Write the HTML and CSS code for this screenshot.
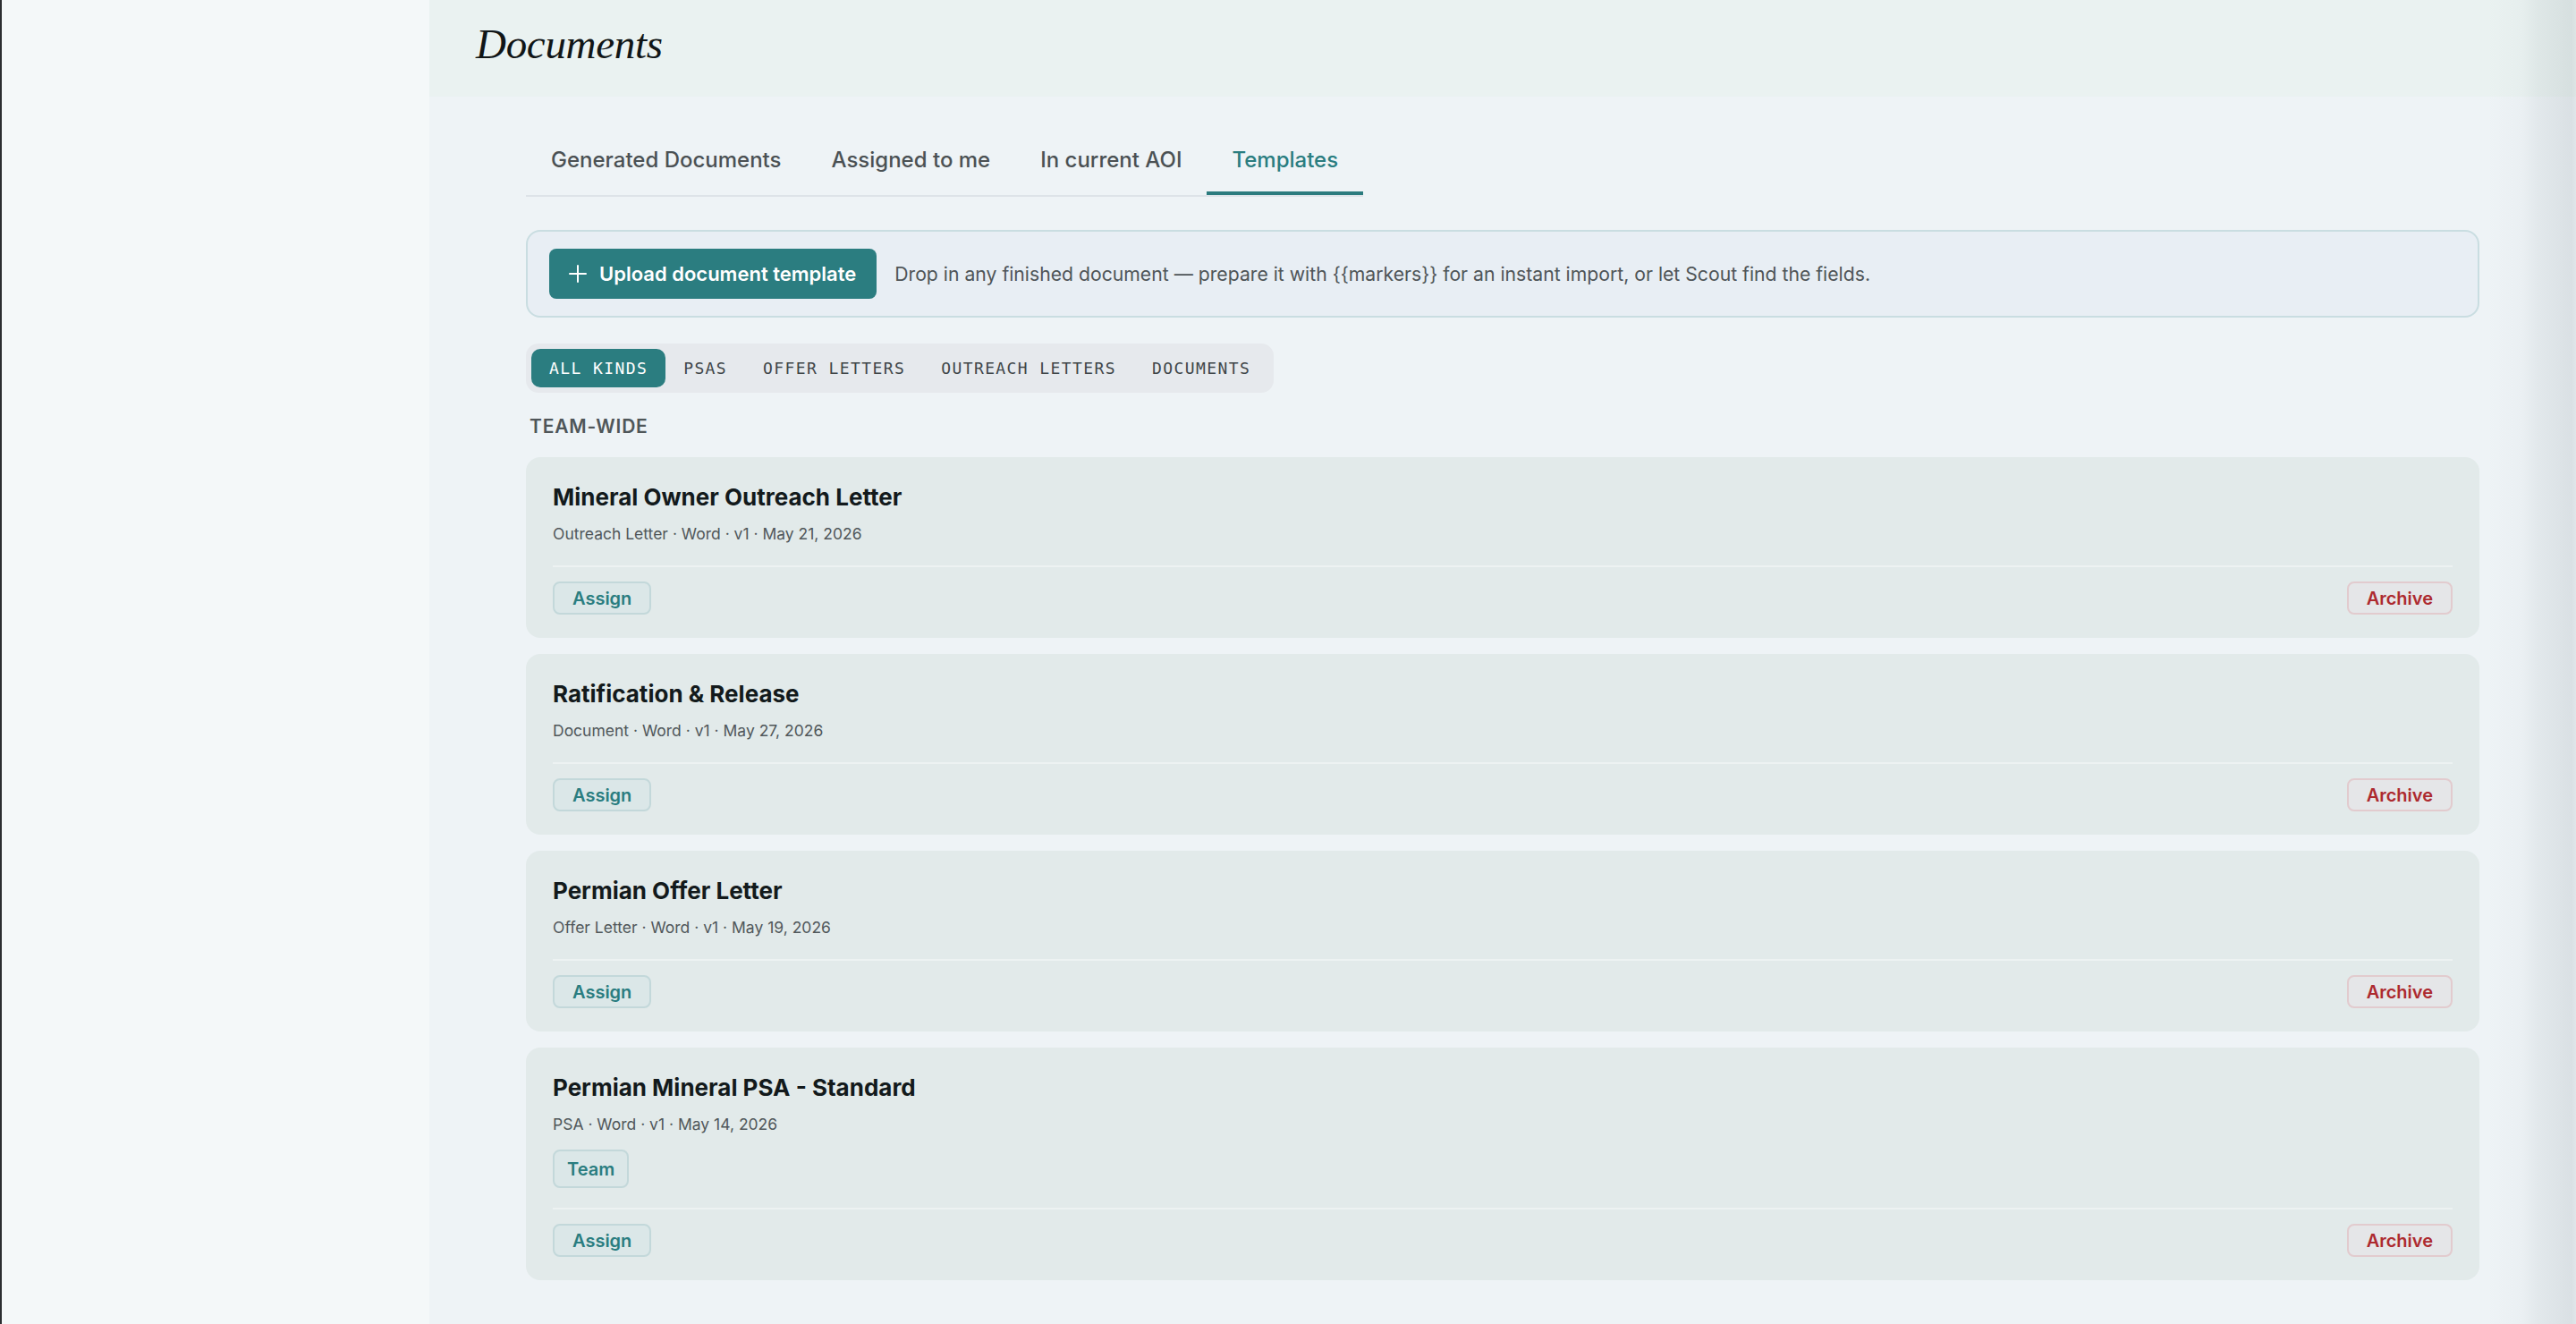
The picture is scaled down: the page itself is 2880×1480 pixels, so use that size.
FILE: index.html
```html
<!DOCTYPE html>
<html lang="en">
<head>
<meta charset="utf-8">
<title>Documents</title>
<link rel="stylesheet" href="styles.css">
</head>
<body>
<div class="app">
  <aside class="sidebar"></aside>
  <main class="main">
    <header class="page-head">
      <h1 class="page-title">Documents</h1>
    </header>
    <div class="content">
      <nav class="tabs">
        <a class="tab">Generated Documents</a>
        <a class="tab">Assigned to me</a>
        <a class="tab">In current AOI</a>
        <a class="tab tab-active">Templates</a>
      </nav>

      <section class="upload-banner">
        <button class="btn-primary">
          <svg class="plus" viewBox="0 0 20 20" width="20" height="20" aria-hidden="true">
            <path d="M10 1v18M1 10h18" stroke="currentColor" stroke-width="2" fill="none" stroke-linecap="round"/>
          </svg>
          Upload document template
        </button>
        <p class="upload-hint">Drop in any finished document — prepare it with {{markers}} for an instant import, or let Scout find the fields.</p>
      </section>

      <div class="kind-filter">
        <button class="chip chip-active">All kinds</button>
        <button class="chip">PSAs</button>
        <button class="chip">Offer letters</button>
        <button class="chip">Outreach letters</button>
        <button class="chip">Documents</button>
      </div>

      <h2 class="group-label">Team-wide</h2>

      <div class="card-list">
        <article class="card">
          <h3 class="card-title">Mineral Owner Outreach Letter</h3>
          <p class="card-meta">Outreach Letter · Word · v1 · May 21, 2026</p>
          <div class="card-actions">
            <button class="btn-soft">Assign</button>
            <button class="btn-danger">Archive</button>
          </div>
        </article>
        <article class="card">
          <h3 class="card-title">Ratification &amp; Release</h3>
          <p class="card-meta">Document · Word · v1 · May 27, 2026</p>
          <div class="card-actions">
            <button class="btn-soft">Assign</button>
            <button class="btn-danger">Archive</button>
          </div>
        </article>
        <article class="card">
          <h3 class="card-title">Permian Offer Letter</h3>
          <p class="card-meta">Offer Letter · Word · v1 · May 19, 2026</p>
          <div class="card-actions">
            <button class="btn-soft">Assign</button>
            <button class="btn-danger">Archive</button>
          </div>
        </article>
        <article class="card">
          <h3 class="card-title">Permian Mineral PSA - Standard</h3>
          <p class="card-meta">PSA · Word · v1 · May 14, 2026</p>
          <span class="badge">Team</span>
          <div class="card-actions">
            <button class="btn-soft">Assign</button>
            <button class="btn-danger">Archive</button>
          </div>
        </article>
      </div>
    </div>
    <div class="edge-shade"></div>
  </main>
</div>
</body>
</html>
```

FILE: styles.css
```css
* { box-sizing: border-box; }

html, body {
  margin: 0;
  height: 100%;
}

body {
  font-family: Inter, "Liberation Sans", sans-serif;
  color: #161c1e;
  background: #eef3f6;
  overflow: hidden;
}

.app {
  display: flex;
  height: 1480px;
}

/* left navigation rail */
.sidebar {
  width: 480px;
  flex: none;
  background: #f4f8f9;
  border-left: 2px solid #2b2e31;
}

.main {
  flex: 1;
  position: relative;
  display: flex;
  flex-direction: column;
  background: #eef3f6;
  overflow: hidden;
}

.page-head {
  height: 108px;
  flex: none;
  padding: 26px 52px 0;
  background: #eaf2f1;
}

.page-title {
  margin: 0;
  font-family: "Liberation Serif", serif;
  font-style: italic;
  font-weight: 400;
  font-size: 47px;
  line-height: 1;
  color: #111617;
  letter-spacing: -0.3px;
}

.content {
  padding: 0 108px;
  display: flex;
  flex-direction: column;
  align-items: flex-start;
}

/* tabs */
.tabs {
  display: inline-flex;
  margin-top: 36px;
  border-bottom: 2px solid #dde3e8;
}

.tab {
  padding: 20px 28px 21px;
  font-size: 24px;
  line-height: 29px;
  font-weight: 500;
  color: #4b5154;
  border-bottom: 4px solid transparent;
  cursor: pointer;
}

.tab-active {
  color: #2a7d80;
  border-bottom-color: #2b7b7e;
}

/* upload banner */
.upload-banner {
  align-self: stretch;
  margin-top: 37px;
  display: flex;
  align-items: center;
  gap: 20px;
  padding: 19px 24px;
  background: #e8eef4;
  border: 2px solid #c9dde1;
  border-radius: 16px;
}

.btn-primary {
  display: inline-flex;
  align-items: center;
  gap: 14px;
  height: 56px;
  padding: 0 23px 0 22px;
  border: 0;
  border-radius: 8px;
  background: #2b7d80;
  color: #fff;
  font-family: inherit;
  font-size: 22px;
  font-weight: 600;
}

.plus { flex: none; }

.upload-hint {
  margin: 0;
  font-size: 21.2px;
  color: #4f5558;
}

/* kind filter */
.kind-filter {
  display: inline-flex;
  margin-top: 29px;
  padding: 6px;
  background: #e6e9ed;
  border-radius: 14px;
}

.chip {
  height: 43px;
  padding: 0 20px;
  border: 0;
  border-radius: 10px;
  background: transparent;
  font-family: "DejaVu Sans Mono", "Liberation Mono", monospace;
  font-size: 18px;
  letter-spacing: 1.4px;
  text-transform: uppercase;
  color: #3f4649;
}

.chip-active {
  background: #2b7d80;
  color: #fff;
}

.group-label {
  margin: 25px 0 0 4px;
  font-size: 21px;
  line-height: 26px;
  font-weight: 600;
  letter-spacing: 0.8px;
  text-transform: uppercase;
  color: #4f5659;
}

/* template cards */
.card-list {
  align-self: stretch;
  margin-top: 21px;
  display: flex;
  flex-direction: column;
  gap: 18px;
}

.card {
  display: flex;
  flex-direction: column;
  align-items: flex-start;
  padding: 29px 30px 26px;
  background: #e2eaea;
  border-radius: 16px;
}

.card-title {
  margin: 0;
  font-size: 26px;
  line-height: 32px;
  font-weight: 700;
  color: #131a1c;
}

.card-meta {
  margin: 12px 0 0;
  font-size: 17.5px;
  line-height: 26px;
  color: #50575a;
}

.badge {
  margin-top: 15px;
  height: 43px;
  display: inline-flex;
  align-items: center;
  padding: 0 14px;
  border: 2px solid #c3d8da;
  border-radius: 8px;
  background: #dbe7e8;
  font-size: 20px;
  font-weight: 600;
  color: #2a7d80;
}

.card-actions {
  align-self: stretch;
  display: flex;
  justify-content: space-between;
  align-items: center;
  margin-top: 22px;
  padding-top: 16px;
  border-top: 2px solid #edf2f2;
}

.btn-soft,
.btn-danger {
  height: 37px;
  padding: 0 20px;
  border-radius: 8px;
  font-family: inherit;
  font-size: 20px;
  font-weight: 600;
}

.btn-soft {
  border: 2px solid #c3d8da;
  background: #dbe7e8;
  color: #2a7d80;
}

.btn-danger {
  border: 2px solid #e2cbce;
  background: #e5e6e8;
  color: #ad2a2f;
}

/* soft shade along the right edge of the workspace */
.edge-shade {
  position: absolute;
  top: 0;
  right: 0;
  bottom: 0;
  width: 100px;
  pointer-events: none;
  background: linear-gradient(to right,
    rgba(40, 60, 70, 0) 0,
    rgba(40, 60, 70, 0.02) 40%,
    rgba(40, 60, 70, 0.06) 57%,
    rgba(40, 60, 70, 0.10) 95%,
    rgba(40, 60, 70, 0.07) 100%);
}
```
